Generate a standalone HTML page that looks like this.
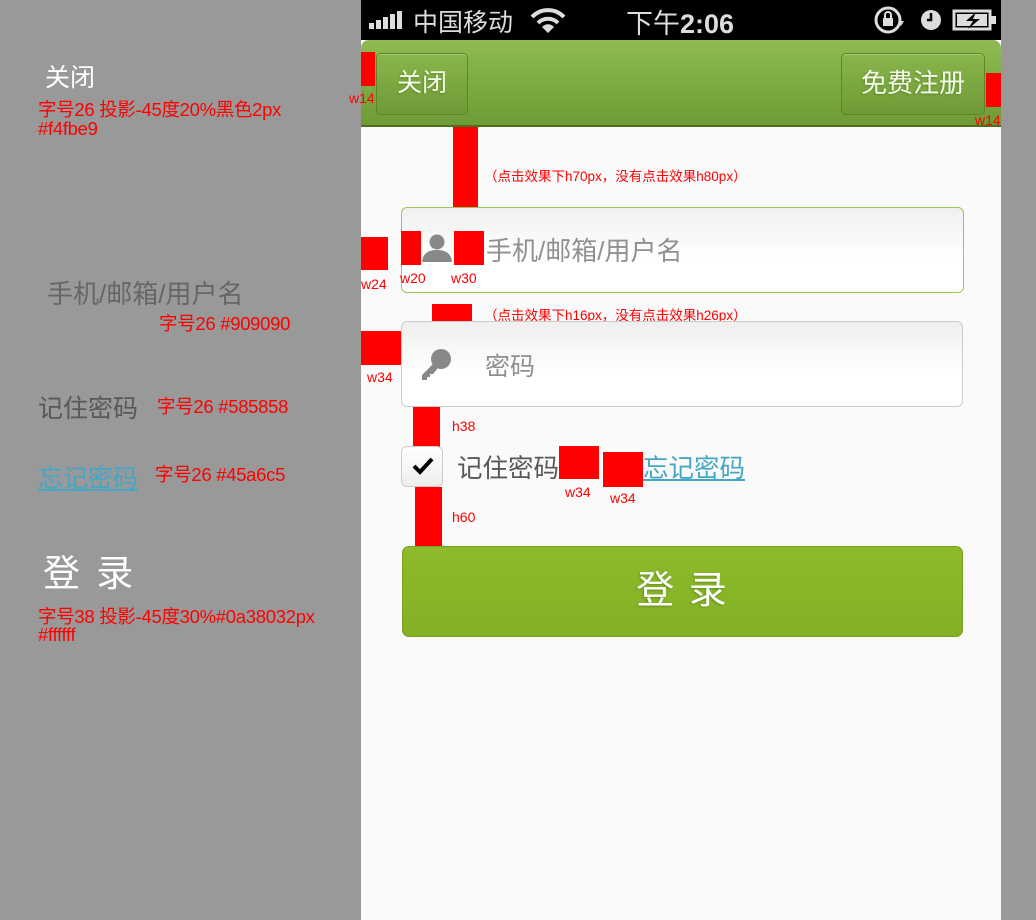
<!DOCTYPE html>
<html><head><meta charset="utf-8">
<style>
*{margin:0;padding:0;box-sizing:border-box}
body{width:1036px;height:920px;background:#999999;position:relative;overflow:hidden;font-family:"Liberation Sans","Noto Sans CJK SC",sans-serif}
.a{position:absolute;white-space:nowrap}
.r{position:absolute;background:#ff0000}
.rt{position:absolute;color:#f00;font-size:14px;white-space:nowrap}
.note{position:absolute;color:#f00;font-size:18.5px;white-space:nowrap;letter-spacing:-0.3px}
</style></head><body>
<div class="a" style="left:45px;top:58px;font-size:25px;color:#fff">关闭</div>
<div class="note" style="left:38px;top:96px">字号26 投影-45度20%黑色2px</div>
<div class="note" style="left:38px;top:118px">#f4fbe9</div>
<div class="a" style="left:47px;top:274px;font-size:26px;color:#666">手机/邮箱/用户名</div>
<div class="note" style="left:159px;top:310px">字号26 #909090</div>
<div class="a" style="left:38px;top:389px;font-size:25px;color:#585858">记住密码</div>
<div class="note" style="left:157px;top:393px">字号26 #585858</div>
<div class="a" style="left:38px;top:459px;font-size:25px;color:#45a6c5;text-decoration:underline">忘记密码</div>
<div class="note" style="left:155px;top:461px">字号26 #45a6c5</div>
<div class="a" style="left:43px;top:543px;font-size:37px;color:#fff;letter-spacing:3px">登 录</div>
<div class="note" style="left:38px;top:603px">字号38 投影-45度30%#0a38032px</div>
<div class="note" style="left:38px;top:624px">#ffffff</div>

<div style="position:absolute;left:361px;top:0;width:640px;height:920px;background:#fafafa"></div>
<div style="position:absolute;left:361px;top:0;width:640px;height:40px;background:#000"></div>
<div style="position:absolute;left:369px;top:11px;width:40px;height:18px">
 <div style="position:absolute;left:0;bottom:0;width:5px;height:6px;background:#ddd"></div>
 <div style="position:absolute;left:7px;bottom:0;width:5px;height:9px;background:#ddd"></div>
 <div style="position:absolute;left:14px;bottom:0;width:5px;height:12px;background:#ddd"></div>
 <div style="position:absolute;left:21px;bottom:0;width:5px;height:15px;background:#ddd"></div>
 <div style="position:absolute;left:28px;bottom:0;width:5px;height:18px;background:#ddd"></div>
</div>
<div class="a" style="left:413px;top:3px;font-size:25px;color:#ddd">中国移动</div>
<svg class="a" style="left:530px;top:8px" width="36" height="26" viewBox="0 0 36 26"><path d="M2 9 A22 22 0 0 1 34 9" stroke="#ddd" stroke-width="4" fill="none"/><path d="M8 15 A14 14 0 0 1 28 15" stroke="#ddd" stroke-width="4" fill="none"/><path d="M18 25 L12 19 A8 8 0 0 1 24 19 Z" fill="#ddd"/></svg>
<div class="a" style="left:626px;top:2px;font-size:27px;color:#ddd">下午<b>2:06</b></div>
<svg class="a" style="left:872px;top:5px" width="36" height="30" viewBox="0 0 36 30"><circle cx="16" cy="15" r="12" stroke="#ddd" stroke-width="3" fill="none"/><rect x="11" y="13" width="10" height="8" fill="#ddd"/><path d="M13 13 v-3 a3 3 0 0 1 6 0 v3" stroke="#ddd" stroke-width="2" fill="none"/><path d="M26 16 l6 0 l-3 5z" fill="#ddd"/></svg>
<svg class="a" style="left:920px;top:9px" width="22" height="22"><circle cx="11" cy="11" r="10" fill="#ddd"/><path d="M11 4 v7 h-4" stroke="#000" stroke-width="2.5" fill="none"/></svg>
<svg class="a" style="left:952px;top:9px" width="46" height="22"><rect x="2" y="2" width="36" height="18" stroke="#ddd" stroke-width="3" fill="none"/><rect x="39" y="7" width="5" height="8" fill="#ddd"/><rect x="5" y="5" width="30" height="12" fill="#ddd"/><path d="M24 3 L14 12 H21 L16 20 L28 10 H21 Z" fill="#000"/></svg>

<div style="position:absolute;left:361px;top:40px;width:640px;height:87px;border-radius:8px 8px 0 0;background:linear-gradient(#8fbb52,#6f9b36);border-bottom:2px solid #4f6f22"></div>
<div class="a" style="left:376px;top:53px;width:92px;height:62px;border-radius:5px;background:linear-gradient(#89b64b,#6f9a36);border:1px solid #5e8428;box-shadow:inset 0 1px 0 rgba(255,255,255,.25);color:#f4fbe9;font-size:25px;text-align:center;line-height:58px;text-shadow:-1px 1px 2px rgba(0,0,0,.2)">关闭</div>
<div class="a" style="left:841px;top:53px;width:144px;height:62px;border-radius:5px;background:linear-gradient(#89b64b,#6f9a36);border:1px solid #5e8428;box-shadow:inset 0 1px 0 rgba(255,255,255,.25);color:#f4fbe9;font-size:26px;text-align:center;line-height:58px;text-shadow:-1px 1px 2px rgba(0,0,0,.2)">免费注册</div>
<div class="r" style="left:361px;top:52px;width:14px;height:34px"></div>
<div class="rt" style="left:349px;top:90px">w14</div>
<div class="r" style="left:986px;top:73px;width:15px;height:34px"></div>
<div class="rt" style="left:975px;top:112px">w14</div>

<div class="r" style="left:453px;top:127px;width:25px;height:80px"></div>
<div class="rt" style="left:484px;top:165px;font-size:13.5px">（点击效果下h70px，没有点击效果h80px）</div>

<div class="a" style="left:401px;top:207px;width:563px;height:86px;border:1px solid #9dc65a;border-radius:6px;background:linear-gradient(#f0f0f0,#fff 60%)"></div>
<div class="r" style="left:361px;top:237px;width:27px;height:33px"></div>
<div class="rt" style="left:361px;top:276px">w24</div>
<div class="r" style="left:401px;top:231px;width:20px;height:34px"></div>
<div class="rt" style="left:400px;top:270px">w20</div>
<svg class="a" style="left:421px;top:232px" width="32" height="30" viewBox="0 0 32 30"><circle cx="16" cy="10" r="7.5" fill="#888"/><path d="M1 30 C2 20 9 18 16 18 C23 18 30 20 31 30 Z" fill="#888"/></svg>
<div class="r" style="left:454px;top:231px;width:30px;height:34px"></div>
<div class="rt" style="left:451px;top:270px">w30</div>
<div class="a" style="left:486px;top:231px;font-size:26px;color:#909090">手机/邮箱/用户名</div>

<div class="r" style="left:432px;top:304px;width:40px;height:17px"></div>
<div class="rt" style="left:484px;top:304px;font-size:13.5px">（点击效果下h16px，没有点击效果h26px）</div>

<div class="a" style="left:401px;top:321px;width:562px;height:86px;border:1px solid #ccc;border-radius:6px;background:linear-gradient(#efefef,#fff 60%)"></div>
<div class="r" style="left:361px;top:331px;width:40px;height:34px"></div>
<div class="rt" style="left:367px;top:369px">w34</div>
<svg class="a" style="left:419px;top:347px" width="34" height="34" viewBox="0 0 34 34"><circle cx="22" cy="12" r="10" fill="#888"/><path d="M14 17 L3 28 V33 H8 V30 H11 V27 H14 L19 21 Z" fill="#888"/></svg>
<div class="a" style="left:485px;top:347px;font-size:25px;color:#909090">密码</div>

<div class="r" style="left:413px;top:407px;width:27px;height:40px"></div>
<div class="rt" style="left:452px;top:418px">h38</div>

<div class="a" style="left:401px;top:446px;width:42px;height:41px;border:1px solid #ccc;border-radius:6px;background:linear-gradient(#fff,#eee)"></div>
<svg class="a" style="left:411px;top:455px" width="24" height="22" viewBox="0 0 24 22"><path d="M3 11 L9 17 L21 4" stroke="#000" stroke-width="4" fill="none"/></svg>
<div class="a" style="left:457px;top:448px;font-size:25.5px;color:#585858">记住密码</div>
<div class="a" style="left:643px;top:448px;font-size:25.5px;color:#45a6c5;text-decoration:underline">忘记密码</div>
<div class="r" style="left:559px;top:446px;width:40px;height:33px"></div>
<div class="rt" style="left:565px;top:484px">w34</div>
<div class="r" style="left:603px;top:452px;width:40px;height:35px"></div>
<div class="rt" style="left:610px;top:490px">w34</div>

<div class="r" style="left:415px;top:487px;width:27px;height:60px"></div>
<div class="rt" style="left:452px;top:509px">h60</div>

<div class="a" style="left:402px;top:546px;width:561px;height:91px;border-radius:7px;background:linear-gradient(#8dba2b,#84b026);border:1px solid #779f22;color:#fff;font-size:38px;text-align:center;line-height:88px;letter-spacing:2px;text-shadow:-1px 1px 2px rgba(10,56,3,.3)">登 录</div>
</body></html>
